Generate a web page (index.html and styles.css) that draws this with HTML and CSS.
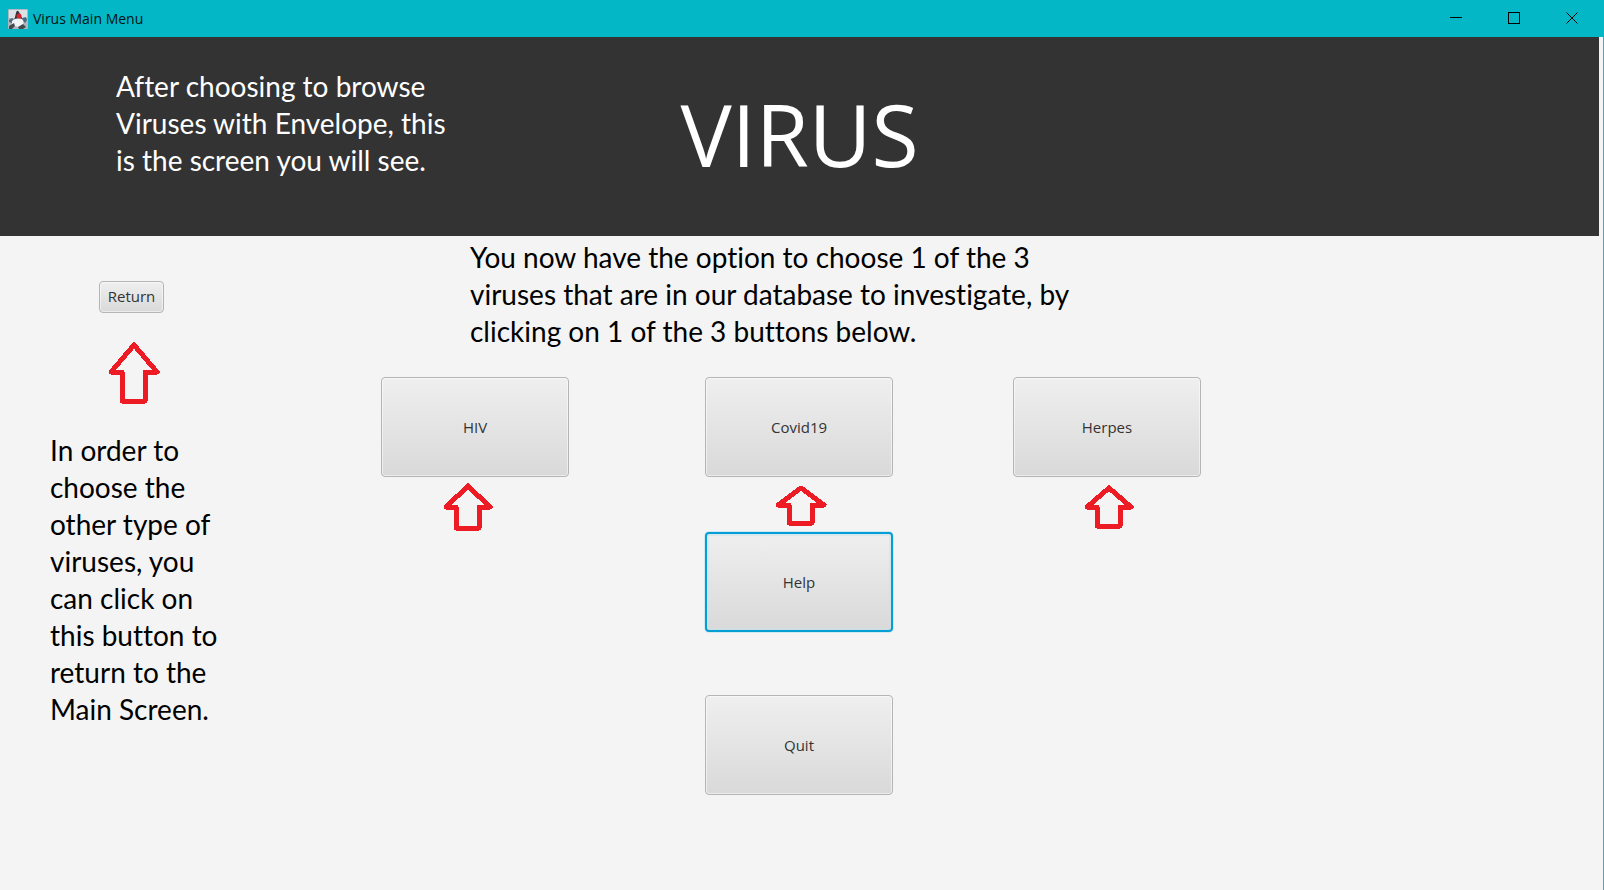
FILE: index.html
```html
<!DOCTYPE html>
<html lang="en">
<head>
<meta charset="utf-8">
<title>Virus Main Menu</title>
<link rel="stylesheet" href="styles.css">
</head>
<body>
<div class="window">
  <header class="titlebar">
    <svg class="app-icon" viewBox="0 0 20 20" aria-hidden="true">
      <rect width="20" height="20" rx="1" fill="#aeb6be"/>
      <rect x="1" y="1" width="18" height="8" fill="#dce1e6"/>
      <path d="M6 12L8 4Q9 0 11 3L15 11L13 12L8 10Z" fill="#30343a"/>
      <path d="M1 11L4 9L6 11L4 14L1 13Z" fill="#536b80"/>
      <path d="M14 9L18 8L19 11L17 14L15 12Z" fill="#496b80"/>
      <path d="M4 12Q8 8 14 10Q17 13 14 17L11 18L7 17L4 19Z" fill="#f2f3f4"/>
      <path d="M1 17L6 14L7 17L4 20H1ZM10 18L15 15L18 18L15 20H11Z" fill="#454a50"/>
      <circle cx="11" cy="7" r="2.5" fill="#d8232e"/>
    </svg>
    <span class="caption">Virus Main Menu</span>
    <div class="controls">
      <button class="control" aria-label="Minimize"><svg viewBox="0 0 12 12" shape-rendering="crispEdges"><path d="M0 5.5H12"/></svg></button>
      <button class="control" aria-label="Maximize"><svg viewBox="0 0 12 12" shape-rendering="crispEdges"><path d="M.5 .5H11.5V11.5H.5Z"/></svg></button>
      <button class="control" aria-label="Close"><svg viewBox="0 0 12 12"><path d="M.5 .5L11.5 11.5M11.5 .5L.5 11.5"/></svg></button>
    </div>
  </header>
  <div class="client">
    <section class="banner">
      <p class="note note-light">After choosing to browse<br>Viruses with Envelope, this<br>is the screen you will see.</p>
      <h1 class="title">VIRUS</h1>
    </section>
    <div class="content">
      <aside class="side">
        <button class="btn btn-small">Return</button>
        <svg class="arrow arrow-return" width="52" height="62" viewBox="0 0 52 62" aria-hidden="true"><path d="M26 3L49 30H37V59H14V30H3Z"/></svg>
        <p class="note">In order to<br>choose the<br>other type of<br>viruses, you<br>can click on<br>this button to<br>return to the<br>Main Screen.</p>
      </aside>
      <main class="main">
        <p class="note intro">You now have the option to choose 1 of the 3<br>viruses that are in our database to investigate, by<br>clicking on 1 of the 3 buttons below.</p>
        <div class="choices">
          <div class="choice">
            <button class="btn">HIV</button>
            <svg class="arrow arrow-hiv" width="50" height="48" viewBox="0 0 50 48" aria-hidden="true"><path d="M25 3L47 24H36V45H13V24H3Z"/></svg>
          </div>
          <div class="choice">
            <button class="btn">Covid19</button>
            <svg class="arrow arrow-covid" width="52" height="41" viewBox="0 0 52 41" aria-hidden="true"><path d="M26 3L49 20H37V38H14V20H3Z"/></svg>
            <button class="btn btn-focus">Help</button>
            <button class="btn btn-quit">Quit</button>
          </div>
          <div class="choice">
            <button class="btn">Herpes</button>
            <svg class="arrow arrow-herpes" width="50" height="44" viewBox="0 0 50 44" aria-hidden="true"><path d="M25 3L47 22H36V41H13V22H3Z"/></svg>
          </div>
        </div>
      </main>
    </div>
  </div>
</div>
</body>
</html>
```
FILE: styles.css
```css
* { box-sizing: border-box; }
body {
  margin: 0;
  font-family: "Open Sans", "Noto Sans", sans-serif;
  background: #f4f4f4;
}
.window {
  min-height: 100vh;
  display: flex;
  flex-direction: column;
}
.titlebar {
  height: 37px;
  display: flex;
  align-items: center;
  padding-left: 8px;
  background: #03b7c6;
}
.app-icon { width: 20px; height: 20px; }
.caption {
  margin-left: 5px;
  font-size: 14px;
  line-height: 20px;
  color: #001214;
}
.controls { margin-left: auto; display: flex; height: 36px; padding-right: 3px; align-self: flex-start; }
.control {
  width: 58px;
  padding: 0;
  border: 0;
  background: none;
  display: flex;
  align-items: center;
  justify-content: center;
}
.control svg { width: 12px; height: 12px; fill: none; stroke: #000; }
.client {
  flex: 1;
  padding-right: 4px;
  border-right: 1px solid #2fb4bf;
}
.banner {
  min-height: 199px;
  display: grid;
  grid-template-columns: 1fr auto 1fr;
  align-items: start;
  background: #333;
  color: #fff;
}
.note {
  margin: 0;
  font-family: Lato, "Open Sans", sans-serif;
  font-size: 28px;
  line-height: 37px;
  font-variant-ligatures: none;
  color: #000;
  white-space: nowrap;
}
.note-light { color: #fff; padding: 31px 0 0 116px; }
.title {
  margin: 0;
  padding-top: 38px;
  font-size: 86px;
  line-height: 117px;
  font-weight: 400;
}
.content { display: flex; }
.side {
  width: 381px;
  padding: 45px 0 0 50px;
  display: flex;
  flex-direction: column;
  align-items: flex-start;
}
.main { flex: 1; }
.btn {
  width: 188px;
  height: 100px;
  padding: 0;
  border: 1px solid #b5b5b5;
  border-radius: 4px;
  background: linear-gradient(#efefef, #d9d9d9);
  box-shadow: inset 0 0 0 1px rgba(255, 255, 255, 0.5);
  font-family: inherit;
  font-size: 15px;
  line-height: 20px;
  color: #333;
}
.btn-small { width: 65px; height: 32px; margin-left: 49px; padding-bottom: 2px; }
.btn-focus {
  border: 2px solid #039ed3;
  box-shadow: 0 0 0 1px #d0e9f2, inset 0 0 0 2px rgba(200, 225, 234, 0.5);
}
.btn-quit { margin-top: 63px; }
.arrow {
  display: block;
  fill: none;
  stroke: #ed1c24;
  stroke-width: 5;
  stroke-linejoin: round;
  shape-rendering: crispEdges;
}
.arrow-return { margin: 29px 0 28px 58px; }
.intro { padding: 3px 0 27px 89px; }
.choices {
  display: grid;
  grid-template-columns: 324fr 308fr 586fr;
}
.choice { display: flex; flex-direction: column; align-items: flex-start; }
.arrow-hiv { margin: 6px 0 0 62px; }
.arrow-covid { margin: 8px 0 6px 70px; }
.arrow-herpes { margin: 8px 0 0 71px; }
```
